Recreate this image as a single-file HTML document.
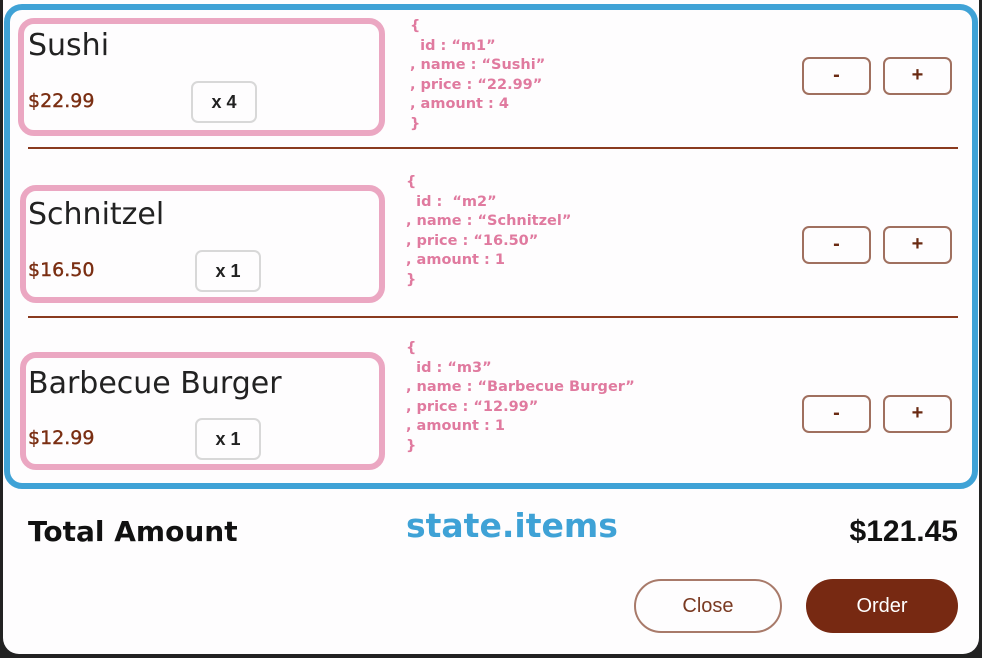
<!DOCTYPE html>
<html><head><meta charset="utf-8"><style>
*{margin:0;padding:0;box-sizing:border-box}
body{width:982px;height:658px;background:#222;position:relative;overflow:hidden;font-family:"Liberation Sans","DejaVu Sans",sans-serif}
.modal{position:absolute;left:3px;top:0;width:976px;height:654px;background:#fefdfe;border-radius:0 0 16px 16px}
.blue{position:absolute;left:4px;top:4px;width:974px;height:485px;border:6px solid #3fa2d6;border-radius:18px}
.pink{position:absolute;left:18px;width:367px;height:118px;border:6px solid #eba7c2;border-radius:16px}
.title{position:absolute;left:28px;font-family:"DejaVu Sans",sans-serif;font-size:30px;color:#222;line-height:1}
.price{position:absolute;left:28px;font-family:"DejaVu Sans",sans-serif;font-size:19px;color:#7a2e12;line-height:1;-webkit-text-stroke:0.4px #7a2e12}
.qty{position:absolute;width:66px;height:42px;border:2px solid #d8d8d8;border-radius:7px;font-size:18px;color:#222;text-align:center;line-height:38px;font-weight:bold}
.sep{position:absolute;left:28px;width:930px;height:2px;background:#8a3a1f}
.json{position:absolute;font-family:"DejaVu Sans",sans-serif;font-size:14.5px;font-weight:bold;color:#e07a9f;line-height:19.6px;white-space:pre}
.btn{position:absolute;width:69px;height:38px;border:2px solid #a0705f;border-radius:7px;text-align:center;line-height:33px;font-size:20px;font-weight:bold;color:#6a2a12}
</style></head><body>
<div class="modal"></div>
<div class="blue"></div>

<div class="pink" style="top:18px"></div>
<div class="title" style="top:31px">Sushi</div>
<div class="price" style="top:92px">$22.99</div>
<div class="qty" style="left:191px;top:81px">x 4</div>
<div class="json" style="left:410px;top:17px">{
  id : “m1”
, name : “Sushi”
, price : “22.99”
, amount : 4
}</div>
<div class="btn" style="left:802px;top:57px">-</div>
<div class="btn" style="left:883px;top:57px">+</div>
<div class="sep" style="top:147px"></div>

<div class="pink" style="top:185px;left:20px;width:365px"></div>
<div class="title" style="top:200px">Schnitzel</div>
<div class="price" style="top:261px">$16.50</div>
<div class="qty" style="left:195px;top:250px">x 1</div>
<div class="json" style="left:406px;top:173px">{
  id :  “m2”
, name : “Schnitzel”
, price : “16.50”
, amount : 1
}</div>
<div class="btn" style="left:802px;top:226px">-</div>
<div class="btn" style="left:883px;top:226px">+</div>
<div class="sep" style="top:316px"></div>

<div class="pink" style="top:352px;left:20px;width:365px"></div>
<div class="title" style="top:369px">Barbecue Burger</div>
<div class="price" style="top:429px">$12.99</div>
<div class="qty" style="left:195px;top:418px">x 1</div>
<div class="json" style="left:406px;top:339px">{
  id : “m3”
, name : “Barbecue Burger”
, price : “12.99”
, amount : 1
}</div>
<div class="btn" style="left:802px;top:395px">-</div>
<div class="btn" style="left:883px;top:395px">+</div>

<div style="position:absolute;left:28px;top:515px;font-size:28px;font-weight:bold;color:#111;font-family:'DejaVu Sans',sans-serif">Total Amount</div>
<div style="position:absolute;left:406px;top:506px;font-size:33px;font-weight:bold;color:#3fa2d6;font-family:'DejaVu Sans',sans-serif">state.items</div>
<div style="position:absolute;right:24px;top:515px;font-size:30px;font-weight:bold;color:#111">$121.45</div>

<div style="position:absolute;left:634px;top:579px;width:148px;height:54px;border:2px solid #a87a6a;border-radius:27px;text-align:center;line-height:50px;font-size:20px;color:#7a3a22">Close</div>
<div style="position:absolute;left:806px;top:579px;width:152px;height:54px;background:#772912;border-radius:27px;text-align:center;line-height:54px;font-size:20px;color:#fff">Order</div>
</body></html>
